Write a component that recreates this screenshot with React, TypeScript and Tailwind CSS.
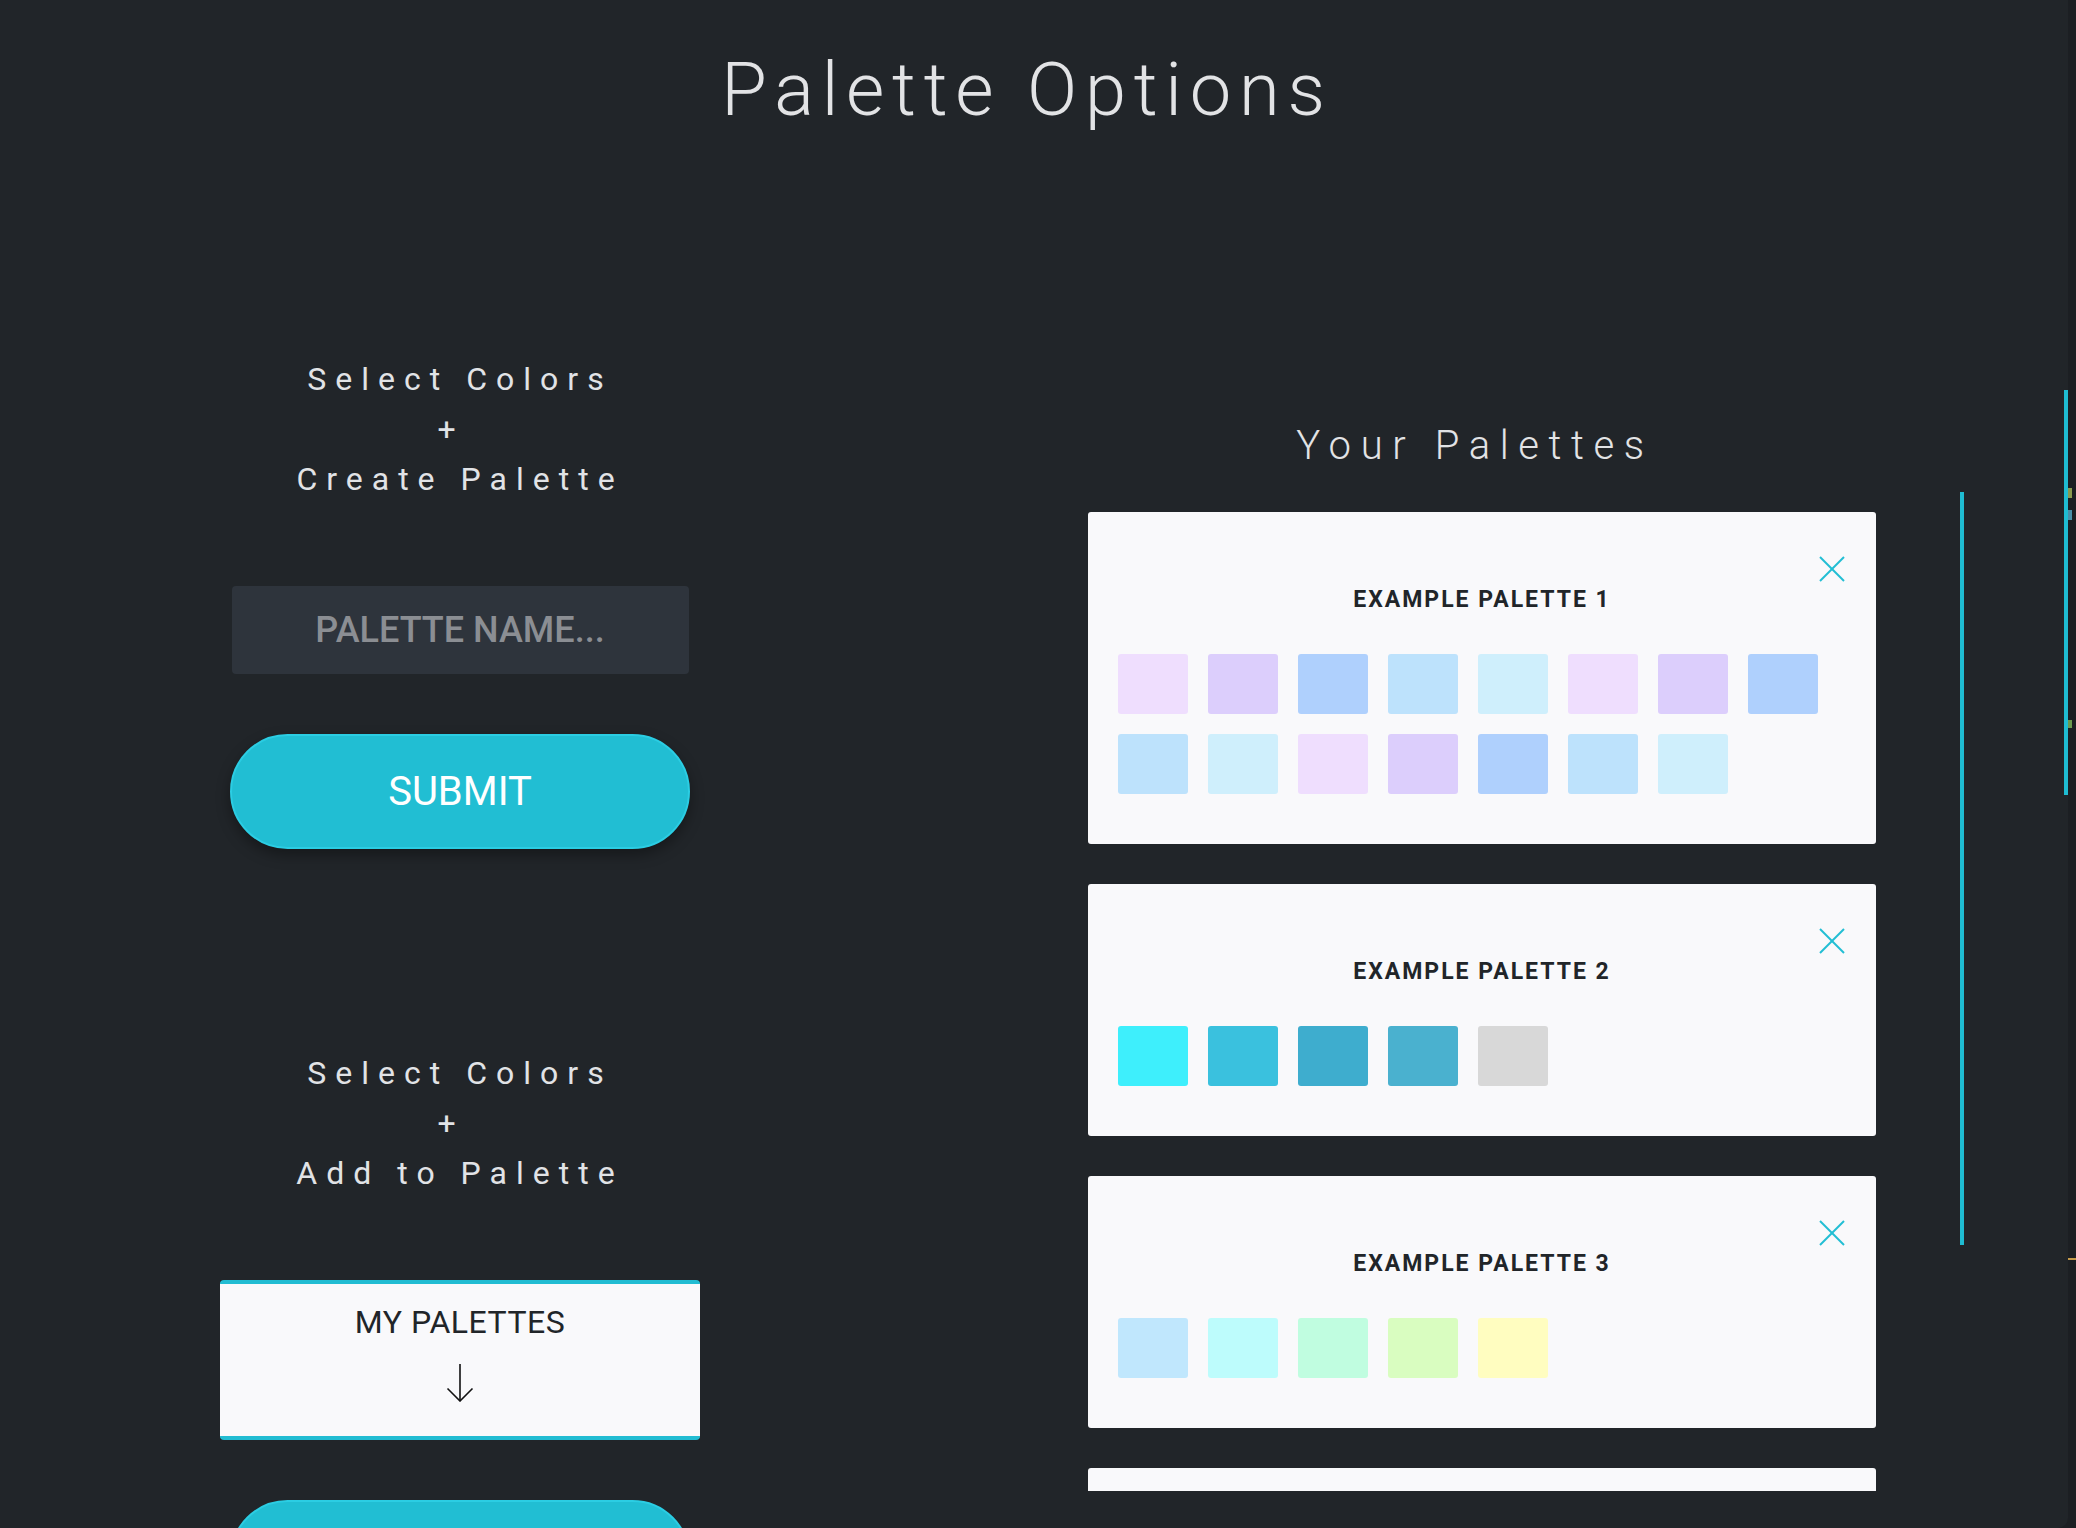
const palettes = [
  {
    name: 'Example Palette 1',
    colors: [
      '#efdefe', '#dccefc', '#afd0fd', '#bde2fc', '#cfeffc',
      '#efdefe', '#dccefc', '#afd0fd', '#bde2fc', '#cfeffc',
      '#efdefe', '#dccefc', '#afd0fd', '#bde2fc', '#cfeffc',
    ],
  },
  { name: 'Example Palette 2', colors: ['#3eeffc', '#3ac1de', '#3eadce', '#4ab1cf', '#d8d8d8'] },
  { name: 'Example Palette 3', colors: ['#c0e7fd', '#bdfcfc', '#c0fde0', '#d9fdc0', '#fffdc0'] },
  {
    name: 'Example Palette 4',
    colors: ['#fde0e0', '#fdd0c0', '#fdf0c0', '#e0fdc0', '#c0fdd8', '#c0f0fd', '#c0d0fd', '#e0c0fd', '#fdc0f0', '#fde0e0'],
  },
];

function CloseIcon() {
  return (
    <svg width="26" height="26" viewBox="0 0 26 26" fill="none">
      <line x1="1" y1="1" x2="25" y2="25" stroke="#22bed3" strokeWidth="2" />
      <line x1="25" y1="1" x2="1" y2="25" stroke="#22bed3" strokeWidth="2" />
    </svg>
  );
}

function ArrowDown() {
  return (
    <svg width="28" height="38" viewBox="0 0 28 38" fill="none">
      <line x1="14" y1="0" x2="14" y2="37" stroke="#111" strokeWidth="1.6" />
      <polyline points="1.5,24.5 14,37 26.5,24.5" stroke="#111" strokeWidth="1.6" fill="none" />
    </svg>
  );
}

function PaletteCard({ name, colors }: { name: string; colors: string[] }) {
  return (
    <div className="relative w-[788px] shrink-0 rounded-[3px] bg-[#f9f9fb] px-[30px] pt-[76px] pb-[50px]">
      <button className="absolute top-[44px] right-[31px]">
        <CloseIcon />
      </button>
      <h3 className="text-center text-[23px] leading-none font-bold uppercase tracking-[2px] text-[#212529]">
        {name}
      </h3>
      <div className="mt-[43px] flex flex-wrap gap-5">
        {colors.map((c, i) => (
          <div key={i} className="h-[60px] w-[70px] rounded-[3px]" style={{ background: c }} />
        ))}
      </div>
    </div>
  );
}

function StepText({ last }: { last: string }) {
  return (
    <div className="text-center text-[32px] leading-[50px] tracking-[9px] text-[#e1e3e6]">
      <div>Select Colors</div>
      <div className="mr-[18px]">+</div>
      <div>{last}</div>
    </div>
  );
}

export default function App() {
  return (
    <div className="flex h-[1528px] w-[2076px] overflow-hidden bg-[#1c1f23] font-['Roboto',sans-serif]">
      <div className="relative h-full w-[2068px] shrink-0 overflow-hidden rounded-br-[10px] bg-[#212529]">
        <h1 className="pt-[53px] pr-[14px] text-center text-[74px] leading-none font-light tracking-[0.105em] text-[#e2e3e5]">
          Palette Options
        </h1>

        <div className="flex">
          {/* left: create + add */}
          <div className="flex w-[920px] flex-col items-center pt-[227px]">
            <StepText last="Create Palette" />
            <input
              placeholder="PALETTE NAME..."
              className="mt-[82px] h-[88px] w-[457px] rounded-[4px] bg-[#2e343c] text-center text-[36px] font-medium text-[#e1e3e6] outline-none placeholder:text-[#8b8e93]"
            />
            <button className="mt-[60px] h-[115px] w-[460px] rounded-full border-2 border-[#2bcde3] bg-[#21bed3] text-[40px] text-white shadow-[0_6px_14px_rgba(0,0,0,0.35)]">
              SUBMIT
            </button>

            <div className="mt-[199px]">
              <StepText last="Add to Palette" />
            </div>
            <div className="mt-[82px] flex h-[160px] w-[480px] flex-col items-center rounded-[4px] border-y-4 border-[#22bcd2] bg-[#f9f9fb] pt-[22px]">
              <span className="text-[32px] leading-none tracking-[0.5px] text-[#212529]">MY PALETTES</span>
              <div className="mt-[26px]">
                <ArrowDown />
              </div>
            </div>
            <button
              aria-label="Add to palette"
              className="mt-[60px] h-[115px] w-[460px] shrink-0 rounded-full border-2 border-[#2bcde3] bg-[#21bed3]"
            />
          </div>

          {/* right: saved palettes */}
          <div className="ml-[80px] flex w-[964px] flex-col items-center pt-[299px]">
            <h2 className="mr-[14px] text-[40px] leading-none font-light tracking-[0.24em] text-[#e2e3e5]">
              Your Palettes
            </h2>
            <div className="relative mt-[26px] flex h-[999px] w-full flex-col items-center gap-[40px] overflow-hidden pt-[20px]">
              {palettes.map((p) => (
                <PaletteCard key={p.name} name={p.name} colors={p.colors} />
              ))}
              <div className="absolute top-0 right-0 h-[753px] w-[4px] bg-[#1fbcd2]" />
            </div>
          </div>
        </div>

        {/* page scrollbar thumb */}
        <div className="absolute top-[390px] right-0 h-[405px] w-[4px] bg-[#1fbcd2]" />
      </div>

      {/* window behind */}
      <div className="flex flex-1 flex-col">
        <div className="mt-[488px] h-[10px] w-[4px] bg-[#8a9a50]" />
        <div className="mt-[12px] h-[10px] w-[4px] bg-[#4a8fa8]" />
        <div className="mt-[200px] h-[8px] w-[4px] bg-[#6c9a50]" />
        <div className="mt-[530px] h-[2px] w-full bg-[#c49a4a]" />
      </div>
    </div>
  );
}
